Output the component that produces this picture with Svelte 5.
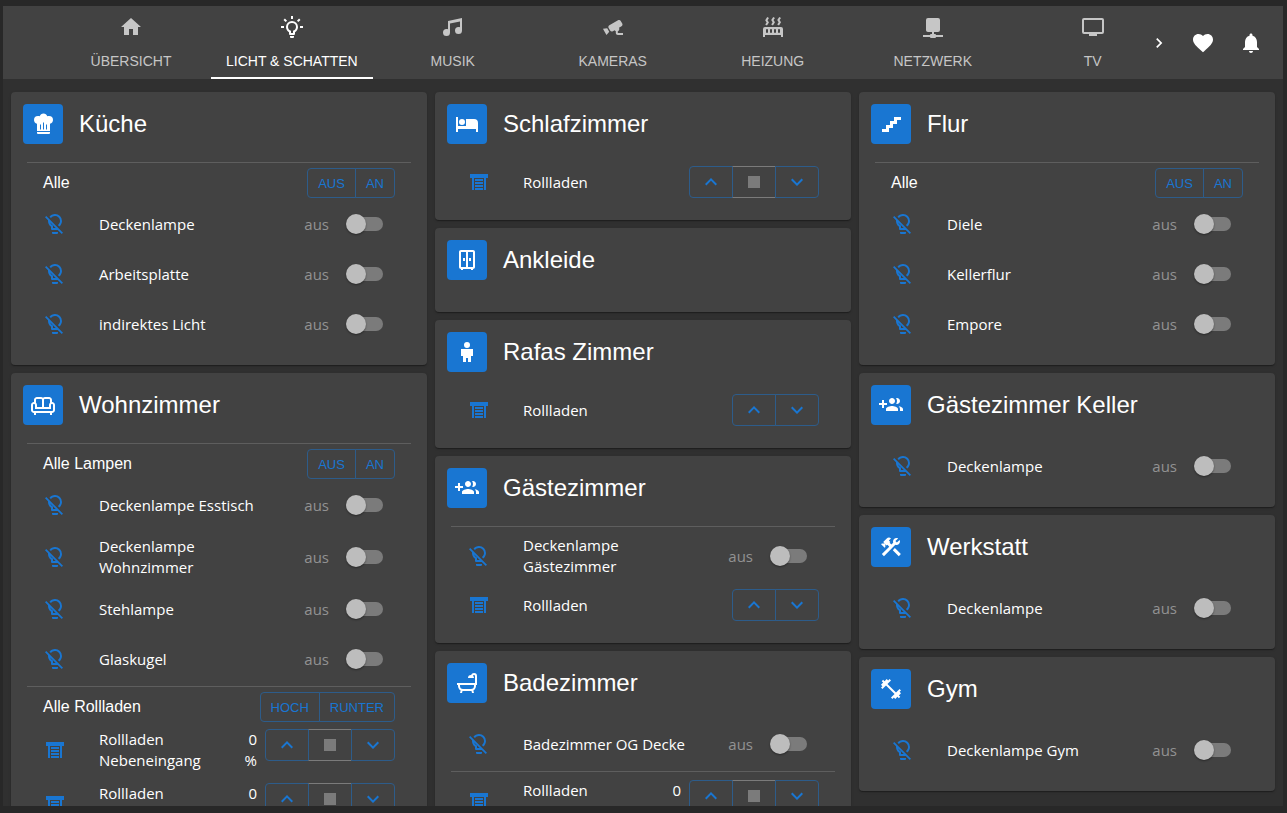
<script lang="ts">
	type Item = {
		type: 'divider' | 'header' | 'light' | 'shutter';
		label?: string;
		actions?: string[];
		on?: boolean;
		stop?: boolean;
		value?: string;
	};
	type Room = { name: string; icon: string; items: Item[] };

	// 24x24 icon paths
	const icons: Record<string, string> = {
		home: 'M10,20V14H14V20H19V12H22L12,3L2,12H5V20H10Z',
		bulbOn:
			'M20,11H23V13H20V11M1,11H4V13H1V11M13,1V4H11V1H13M4.92,3.5L7.05,5.64L5.63,7.05L3.5,4.93L4.92,3.5M16.95,5.63L19.07,3.5L20.5,4.93L18.37,7.05L16.95,5.63M12,6A6,6 0 0,1 18,12C18,14.22 16.79,16.16 15,17.2V19A1,1 0 0,1 14,20H10A1,1 0 0,1 9,19V17.2C7.21,16.16 6,14.22 6,12A6,6 0 0,1 12,6M14,21V22A1,1 0 0,1 13,23H11A1,1 0 0,1 10,22V21H14M11,18H13V15.87C14.73,15.43 16,13.86 16,12A4,4 0 0,0 12,8A4,4 0 0,0 8,12C8,13.86 9.27,15.43 11,15.87V18Z',
		bulbOff:
			'M12,2C9.76,2 7.78,3.05 6.5,4.68L7.93,6.11C8.84,4.84 10.32,4 12,4A5,5 0 0,1 17,9C17,10.68 16.16,12.16 14.89,13.06L16.31,14.5C17.94,13.21 19,11.24 19,9A7,7 0 0,0 12,2M3.28,4L2,5.27L5.04,8.3C5,8.53 5,8.76 5,9C5,11.38 6.19,13.47 8,14.74V17A1,1 0 0,0 9,18H14.73L18.73,22L20,20.72L3.28,4M7.23,10.5L12.73,16H10V13.58C8.68,13 7.66,11.88 7.23,10.5M9,20V21A1,1 0 0,0 10,22H14A1,1 0 0,0 15,21V20H9Z',
		music:
			'M21,3V15.5A3.5,3.5 0 0,1 17.5,19A3.5,3.5 0 0,1 14,15.5A3.5,3.5 0 0,1 17.5,12C18.04,12 18.55,12.12 19,12.34V6.47L9,8.6V17.5A3.5,3.5 0 0,1 5.5,21A3.5,3.5 0 0,1 2,17.5A3.5,3.5 0 0,1 5.5,14C6.04,14 6.55,14.12 7,14.34V6L21,3Z',
		cctv:
			'M18.15,4.94C17.77,4.91 17.37,5 17,5.2L8.35,10.2C7.39,10.76 7.07,12 7.62,12.94L9.12,15.53C9.67,16.5 10.89,16.82 11.85,16.27L13.65,15.23C13.92,15.69 14.32,16.06 14.81,16.27V18.04C14.81,19.13 15.7,20 16.81,20H22V18.04H16.81V16.27C17.72,15.87 18.31,14.97 18.31,14C18.31,13.54 18.19,13.11 17.97,12.73L20.5,11.27C21.47,10.71 21.8,9.5 21.24,8.53L19.74,5.94C19.4,5.34 18.79,5 18.15,4.94M6.22,13.17L2,13.87L2.75,15.17L4.75,18.63L5.5,19.93L8.22,16.63L6.22,13.17Z',
		radiator:
			'M7.95,3L6.53,5.19L7.95,7.4H7.94L5.95,10.5L4.22,9.6L5.64,7.39L4.22,5.19L6.22,2.09L7.95,3M13.95,2.89L12.53,5.1L13.95,7.3L13.94,7.31L11.95,10.4L10.22,9.5L11.64,7.3L10.22,5.1L12.22,2L13.95,2.89M20,2.89L18.56,5.1L20,7.3V7.31L18,10.4L16.25,9.5L17.67,7.3L16.25,5.1L18.25,2L20,2.89M2,22V14A2,2 0 0,1 4,12H20A2,2 0 0,1 22,14V22H20V20H4V22H2M6,14A1,1 0 0,0 5,15V17A1,1 0 0,0 6,18A1,1 0 0,0 7,17V15A1,1 0 0,0 6,14M10,14A1,1 0 0,0 9,15V17A1,1 0 0,0 10,18A1,1 0 0,0 11,17V15A1,1 0 0,0 10,14M14,14A1,1 0 0,0 13,15V17A1,1 0 0,0 14,18A1,1 0 0,0 15,17V15A1,1 0 0,0 14,14M18,14A1,1 0 0,0 17,15V17A1,1 0 0,0 18,18A1,1 0 0,0 19,17V15A1,1 0 0,0 18,14Z',
		network:
			'M17,3A2,2 0 0,1 19,5V15A2,2 0 0,1 17,17H13V19H14A1,1 0 0,1 15,20H22V22H15A1,1 0 0,1 14,23H10A1,1 0 0,1 9,22H2V20H9A1,1 0 0,1 10,19H11V17H7C5.89,17 5,16.1 5,15V5A2,2 0 0,1 7,3H17Z',
		tv: 'M21,17H3V5H21M21,3H3A2,2 0 0,0 1,5V17A2,2 0 0,0 3,19H8V21H16V19H21A2,2 0 0,0 23,17V5A2,2 0 0,0 21,3Z',
		next: 'M8.59,16.58L13.17,12L8.59,7.41L10,6L16,12L10,18L8.59,16.58Z',
		heart:
			'M12,21.35L10.55,20.03C5.4,15.36 2,12.27 2,8.5C2,5.41 4.42,3 7.5,3C9.24,3 10.91,3.81 12,5.08C13.09,3.81 14.76,3 16.5,3C19.58,3 22,5.41 22,8.5C22,12.27 18.6,15.36 13.45,20.03L12,21.35Z',
		bell: 'M12 22c1.1 0 2-.9 2-2h-4c0 1.1.9 2 2 2zm6-6v-5c0-3.07-1.64-5.64-4.5-6.32V4c0-.83-.67-1.5-1.5-1.5s-1.5.67-1.5 1.5v.68C7.63 5.36 6 7.92 6 11v5l-2 2v1h16v-1l-2-2z',
		chefHat:
			'M12.5,1.5C10.73,1.5 9.17,2.67 8.67,4.37C8.14,4.13 7.58,4 7,4A4,4 0 0,0 3,8C3,9.82 4.24,11.41 6,11.87V19H19V11.87C20.76,11.41 22,9.82 22,8A4,4 0 0,0 18,4C17.42,4 16.86,4.13 16.33,4.37C15.83,2.67 14.27,1.5 12.5,1.5M12,10.5H13V17.5H12V10.5M9,12.5H10V17.5H9V12.5M15,12.5H16V17.5H15V12.5M6,20V21A1,1 0 0,0 7,22H18A1,1 0 0,0 19,21V20H6Z',
		sofa: 'M21 9V7C21 5.35 19.65 4 18 4H14C13.23 4 12.53 4.3 12 4.78C11.47 4.3 10.77 4 10 4H6C4.35 4 3 5.35 3 7V9C1.35 9 0 10.35 0 12V17C0 18.65 1.35 20 3 20V22H5V20H19V22H21V20C22.65 20 24 18.65 24 17V12C24 10.35 22.65 9 21 9M14 6H18C18.55 6 19 6.45 19 7V9.78C18.39 10.33 18 11.12 18 12V14H13V7C13 6.45 13.45 6 14 6M5 7C5 6.45 5.45 6 6 6H10C10.55 6 11 6.45 11 7V14H6V12C6 11.12 5.61 10.33 5 9.78V7M22 17C22 17.55 21.55 18 21 18H3C2.45 18 2 17.55 2 17V12C2 11.45 2.45 11 3 11S4 11.45 4 12V16H20V12C20 11.45 20.45 11 21 11S22 11.45 22 12V17Z',
		bed: 'M19,7H11V14H3V5H1V20H3V17H21V20H23V11A4,4 0 0,0 19,7M7,13A3,3 0 0,0 10,10A3,3 0 0,0 7,7A3,3 0 0,0 4,10A3,3 0 0,0 7,13Z',
		wardrobe:
			'M6 2C4.89 2 4 2.89 4 4V19C4 20.11 4.89 21 6 21V22H8V21H16V22H18V21C19.11 21 20 20.11 20 19V4C20 2.89 19.11 2 18 2H6M6 4H11V19H6V4M13 4H18V19H13V4M8 10V13H10V10H8M14 10V13H16V10H14Z',
		child:
			'M12,2A3,3 0 0,1 15,5A3,3 0 0,1 12,8A3,3 0 0,1 9,5A3,3 0 0,1 12,2M11,22H8V16H6V9H18V16H16V22H13V18H11V22Z',
		guests:
			'M13 13C11 13 7 14 7 16V18H19V16C19 14 15 13 13 13M19.62 13.16C20.45 13.88 21 14.82 21 16V18H24V16C24 14.46 21.63 13.5 19.62 13.16M13 11C14.66 11 16 9.66 16 8S14.66 5 13 5 10 6.34 10 8 11.34 11 13 11M18 11C19.66 11 21 9.66 21 8S19.66 5 18 5C17.68 5 17.37 5.05 17.08 5.14C17.65 5.95 18 6.94 18 8S17.65 10.04 17.08 10.85C17.37 10.95 17.68 11 18 11M8 10H5V7H3V10H0V12H3V15H5V12H8V10Z',
		bathtub:
			'M21,14V15C21,16.91 19.93,18.57 18.35,19.41L19,22H17L16.5,20C16.33,20 16.17,20 16,20H8C7.83,20 7.67,20 7.5,20L7,22H5L5.65,19.41C4.07,18.57 3,16.91 3,15V14H2V12H20V5A1,1 0 0,0 19,4C18.5,4 18.12,4.34 18,4.79C18.63,5.33 19,6.13 19,7H13A3,3 0 0,1 16,4C16.06,4 16.11,4 16.17,4C16.58,2.84 17.69,2 19,2A3,3 0 0,1 22,5V14H21M19,14H5V15A3,3 0 0,0 8,18H16A3,3 0 0,0 19,15V14Z',
		stairs: 'M15,5V9H11V13H7V17H3V20H10V16H14V12H18V8H22V5H15Z',
		tools:
			'M13.78 15.17l2.12-2.12 6 6-2.12 2.12zM17.5 10c1.93 0 3.5-1.57 3.5-3.5 0-.58-.16-1.12-.41-1.6l-2.7 2.7-1.49-1.49 2.7-2.7c-.48-.25-1.02-.41-1.6-.41C15.57 3 14 4.57 14 6.5c0 .41.08.8.21 1.16l-1.85 1.85-1.78-1.78.71-.71-1.41-1.41L12 3.49c-1.17-1.17-3.07-1.17-4.24 0L4.22 7.03l1.41 1.41H2.81l-.71.71 3.54 3.54.71-.71V9.15l1.41 1.41.71-.71 1.78 1.78-7.41 7.41 2.12 2.12L16.34 9.79c.36.13.75.21 1.16.21z',
		dumbbell:
			'M20.57,14.86L22,13.43L20.57,12L17,15.57L8.43,7L12,3.43L10.57,2L9.14,3.43L7.71,2L5.57,4.14L4.14,2.71L2.71,4.14L4.14,5.57L2,7.71L3.43,9.14L2,10.57L3.43,12L7,8.43L15.57,17L12,20.57L13.43,22L14.86,20.57L16.29,22L18.43,19.86L19.86,21.29L21.29,19.86L19.86,18.43L22,16.29L20.57,14.86Z',
		shutter:
			'M3 4H21V8H19V20H17V8H7V20H5V8H3V4M8 9H16V11H8V9M8 12H16V14H8V12M8 15H16V17H8V15M8 18H16V20H8V18Z',
		up: 'M7.41,15.41L12,10.83L16.59,15.41L18,14L12,8L6,14L7.41,15.41Z',
		down: 'M7.41,8.58L12,13.17L16.59,8.58L18,10L12,16L6,10L7.41,8.58Z',
		stop: 'M18,18H6V6H18V18Z'
	};

	const tabs = [
		{ label: 'Übersicht', icon: 'home' },
		{ label: 'Licht & Schatten', icon: 'bulbOn' },
		{ label: 'Musik', icon: 'music' },
		{ label: 'Kameras', icon: 'cctv' },
		{ label: 'Heizung', icon: 'radiator' },
		{ label: 'Netzwerk', icon: 'network' },
		{ label: 'TV', icon: 'tv' }
	];

	let activeTab = $state(1);

	const divider = (): Item => ({ type: 'divider' });
	const header = (label: string, ...actions: string[]): Item => ({ type: 'header', label, actions });
	const light = (label: string): Item => ({ type: 'light', label, on: false });
	const shutter = (label: string, stop = false, value = ''): Item => ({
		type: 'shutter',
		label,
		stop,
		value
	});

	let columns: Room[][] = $state([
		[
			{
				name: 'Küche',
				icon: 'chefHat',
				items: [
					divider(),
					header('Alle', 'Aus', 'An'),
					light('Deckenlampe'),
					light('Arbeitsplatte'),
					light('indirektes Licht')
				]
			},
			{
				name: 'Wohnzimmer',
				icon: 'sofa',
				items: [
					divider(),
					header('Alle Lampen', 'Aus', 'An'),
					light('Deckenlampe Esstisch'),
					light('Deckenlampe Wohnzimmer'),
					light('Stehlampe'),
					light('Glaskugel'),
					divider(),
					header('Alle Rollladen', 'Hoch', 'Runter'),
					shutter('Rollladen Nebeneingang', true, '0 %'),
					shutter('Rollladen Wohnzimmer', true, '0 %')
				]
			}
		],
		[
			{ name: 'Schlafzimmer', icon: 'bed', items: [shutter('Rollladen', true)] },
			{ name: 'Ankleide', icon: 'wardrobe', items: [] },
			{ name: 'Rafas Zimmer', icon: 'child', items: [shutter('Rollladen')] },
			{
				name: 'Gästezimmer',
				icon: 'guests',
				items: [divider(), light('Deckenlampe Gästezimmer'), shutter('Rollladen')]
			},
			{
				name: 'Badezimmer',
				icon: 'bathtub',
				items: [light('Badezimmer OG Decke'), divider(), shutter('Rollladen Badezimmer', true, '0 %')]
			}
		],
		[
			{
				name: 'Flur',
				icon: 'stairs',
				items: [
					divider(),
					header('Alle', 'Aus', 'An'),
					light('Diele'),
					light('Kellerflur'),
					light('Empore')
				]
			},
			{ name: 'Gästezimmer Keller', icon: 'guests', items: [light('Deckenlampe')] },
			{ name: 'Werkstatt', icon: 'tools', items: [light('Deckenlampe')] },
			{ name: 'Gym', icon: 'dumbbell', items: [light('Deckenlampe Gym')] }
		]
	]);
</script>

{#snippet icon(name: string, size = 24)}
	<svg viewBox="0 0 24 24" width={size} height={size} aria-hidden="true">
		<path d={icons[name]} fill="currentColor" />
	</svg>
{/snippet}

<div class="app">
	<header class="bar">
		<nav class="tabs">
			{#each tabs as tab, i}
				<button class="tab" class:active={activeTab === i} onclick={() => (activeTab = i)}>
					{@render icon(tab.icon)}
					<span>{tab.label}</span>
				</button>
			{/each}
		</nav>
		<button class="scroll" aria-label="Weitere Seiten">{@render icon('next', 20)}</button>
		<button class="action" aria-label="Favoriten">{@render icon('heart')}</button>
		<button class="action" aria-label="Benachrichtigungen">{@render icon('bell')}</button>
	</header>

	<main>
		{#each columns as rooms, c}
			<div class="column">
				{#each rooms as room, r}
					<section class="card">
						<div class="title">
							<div class="avatar">{@render icon(room.icon)}</div>
							<h2>{room.name}</h2>
						</div>
						<div class="content">
							{#each room.items as item, i}
								{@const id = `item-${c}-${r}-${i}`}
								{#if item.type === 'divider'}
									<hr />
								{:else if item.type === 'header'}
									<div class="row head">
										<span class="group-name">{item.label}</span>
										<div class="buttons">
											{#each item.actions ?? [] as action}
												<button>{action}</button>
											{/each}
										</div>
									</div>
								{:else if item.type === 'light'}
									<div class="row light">
										<span class="icon">{@render icon('bulbOff')}</span>
										<label class="name" for={id}>{item.label}</label>
										<span class="status">{item.on ? 'an' : 'aus'}</span>
										<input class="switch" type="checkbox" {id} bind:checked={item.on} />
									</div>
								{:else}
									<div class="row shutter">
										<span class="icon">{@render icon('shutter')}</span>
										<span class="name">{item.label}</span>
										{#if item.value}
											<span class="value">{item.value}</span>
										{/if}
										<div class="buttons arrows">
											<button aria-label="{item.label} hoch">{@render icon('up')}</button>
											{#if item.stop}
												<button aria-label="{item.label} Stopp" disabled>{@render icon('stop')}</button>
											{/if}
											<button aria-label="{item.label} runter">{@render icon('down')}</button>
										</div>
									</div>
								{/if}
							{/each}
						</div>
					</section>
				{/each}
			</div>
		{/each}
	</main>
</div>

<style>
	:global(body) {
		background: #282828;
	}
	.app {
		box-sizing: border-box;
		height: 100vh;
		padding: 6px 4px 7px 3px;
		display: flex;
		flex-direction: column;
		color: #fff;
		font-family: 'Liberation Sans', Arial, sans-serif;
		font-size: 16px;
	}
	svg {
		display: block;
		flex-shrink: 0;
	}
	button {
		display: flex;
		align-items: center;
		justify-content: center;
		margin: 0;
		padding: 0;
		border: 0;
		background: none;
		color: inherit;
		font: inherit;
		cursor: pointer;
	}

	.bar {
		flex-shrink: 0;
		display: flex;
		align-items: center;
		height: 73px;
		padding: 0 8px;
		background: #424242;
	}
	.tabs {
		flex: 1;
		min-width: 0;
		height: 100%;
		display: flex;
		margin-left: 40px;
		overflow: hidden;
	}
	.tab {
		flex-shrink: 0;
		box-sizing: border-box;
		min-width: 160px;
		padding: 9px 15px 7px;
		flex-direction: column;
		justify-content: flex-start;
		gap: 13px;
		border-bottom: 2px solid transparent;
		color: #c6c6c6;
		font-size: 14px;
		line-height: 18px;
		text-transform: uppercase;
	}
	.tab.active {
		color: #fff;
		border-bottom-color: #fff;
	}
	.scroll {
		width: 40px;
		height: 48px;
	}
	.action {
		width: 48px;
		height: 48px;
	}

	main {
		flex: 1;
		min-height: 0;
		overflow: hidden;
		display: grid;
		grid-template-columns: repeat(3, 1fr);
		align-items: start;
		gap: 8px;
		padding: 13px 8px 8px;
		background: #303030;
	}
	.column {
		display: flex;
		flex-direction: column;
		gap: 8px;
		min-width: 0;
	}
	.card {
		background: #424242;
		border-radius: 4px;
		box-shadow:
			0 2px 1px -1px rgba(0, 0, 0, 0.2),
			0 1px 1px 0 rgba(0, 0, 0, 0.14),
			0 1px 3px 0 rgba(0, 0, 0, 0.12);
	}
	.title {
		display: flex;
		align-items: center;
		gap: 16px;
		padding: 12px;
	}
	.avatar {
		width: 40px;
		height: 40px;
		display: flex;
		align-items: center;
		justify-content: center;
		border-radius: 4px;
		background: #1976d2;
	}
	h2 {
		margin: 0;
		font-size: 24px;
		font-weight: 400;
		line-height: 32px;
	}
	.content {
		padding: 4px 16px 16px;
	}
	hr {
		margin: 2px 0;
		border: 0;
		border-top: 1px solid #5e5e5e;
	}

	.row {
		display: flex;
		box-sizing: border-box;
		padding: 6px 16px;
	}
	.head {
		align-items: center;
		justify-content: space-between;
		padding: 3px 16px 1px;
	}
	.group-name {
		line-height: 30px;
	}
	.light {
		align-items: center;
		min-height: 50px;
	}
	.icon {
		width: 56px;
		flex-shrink: 0;
		align-self: center;
		color: #1976d2;
	}
	.name,
	.status,
	.value {
		font-family: 'Open Sans', 'Noto Sans', sans-serif;
		font-size: 15px;
		line-height: 21px;
	}
	.name {
		flex: 1;
		align-self: center;
		margin-right: 16px;
	}
	.status {
		color: #929292;
		margin-right: 17px;
	}
	.value {
		width: 24px;
		text-align: right;
		margin-right: 8px;
	}

	.switch {
		appearance: none;
		display: flex;
		align-items: center;
		width: 37px;
		height: 14px;
		margin: 0 12px 0 0;
		border-radius: 7px;
		background: linear-gradient(#7b7b7b, #7b7b7b) right / 34px 14px no-repeat;
		cursor: pointer;
	}
	.switch::before {
		content: '';
		width: 20px;
		height: 20px;
		flex-shrink: 0;
		border-radius: 50%;
		background: #bdbdbd;
		box-shadow: 0 1px 2px rgba(0, 0, 0, 0.4);
	}
	.switch:checked {
		justify-content: flex-end;
	}
	.switch:checked::before {
		background: #1976d2;
	}

	.buttons {
		display: flex;
	}
	.buttons button {
		box-sizing: border-box;
		height: 30px;
		padding: 0 10px;
		border: 1px solid #2d5c8a;
		color: #1976d2;
		font-size: 13px;
		text-transform: uppercase;
	}
	.buttons button + button {
		margin-left: -1px;
	}
	.buttons button:first-child {
		border-radius: 4px 0 0 4px;
	}
	.buttons button:last-child {
		border-radius: 0 4px 4px 0;
	}
	.arrows button {
		width: 44px;
		height: 32px;
		padding: 0;
	}
	.arrows button:disabled {
		border-color: #7b7b7b transparent;
		color: #7b7b7b;
		cursor: default;
	}
</style>
